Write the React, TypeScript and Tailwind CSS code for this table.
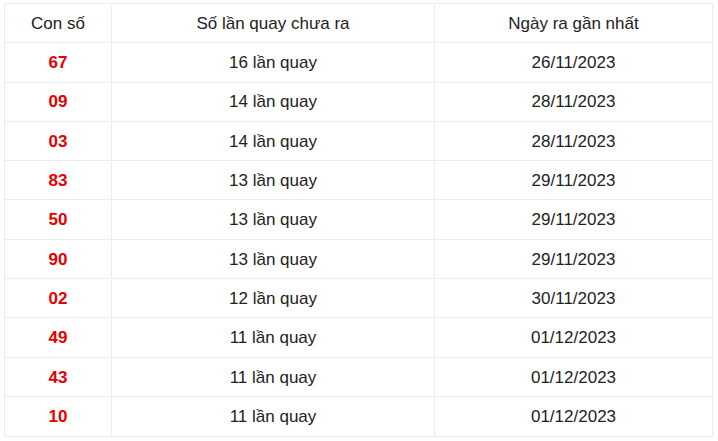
import React from "react";

type Row = {
  number: string;
  count: string;
  date: string;
};

const rows: Row[] = [
  { number: "67", count: "16 lần quay", date: "26/11/2023" },
  { number: "09", count: "14 lần quay", date: "28/11/2023" },
  { number: "03", count: "14 lần quay", date: "28/11/2023" },
  { number: "83", count: "13 lần quay", date: "29/11/2023" },
  { number: "50", count: "13 lần quay", date: "29/11/2023" },
  { number: "90", count: "13 lần quay", date: "29/11/2023" },
  { number: "02", count: "12 lần quay", date: "30/11/2023" },
  { number: "49", count: "11 lần quay", date: "01/12/2023" },
  { number: "43", count: "11 lần quay", date: "01/12/2023" },
  { number: "10", count: "11 lần quay", date: "01/12/2023" },
];

const App: React.FC = () => {
  return (
    <div className="w-[718px] h-[441px] bg-white pl-[4px] pt-[3px] font-['Liberation_Sans',Arial,sans-serif] text-[17px] text-[#222]">
      <div className="w-[709px] border border-[#ececec]">
        <div className="flex h-[39.3px] pt-[1px] border-b border-[#ececec]">
          <div className="w-[107px] flex items-center justify-center border-r border-[#ececec]">
            Con số
          </div>
          <div className="w-[323px] flex items-center justify-center border-r border-[#ececec]">
            Số lần quay chưa ra
          </div>
          <div className="flex-1 flex items-center justify-center">
            Ngày ra gần nhất
          </div>
        </div>
        {rows.map((row, i) => (
          <div
            key={row.number}
            className={`flex h-[39.3px] pt-[1px] ${
              i < rows.length - 1 ? "border-b border-[#ececec]" : ""
            }`}
          >
            <div className="w-[107px] flex items-center justify-center border-r border-[#ececec] font-bold text-[#e60000]">
              {row.number}
            </div>
            <div className="w-[323px] flex items-center justify-center border-r border-[#ececec]">
              {row.count}
            </div>
            <div className="flex-1 flex items-center justify-center">
              {row.date}
            </div>
          </div>
        ))}
      </div>
    </div>
  );
};

export default App;
